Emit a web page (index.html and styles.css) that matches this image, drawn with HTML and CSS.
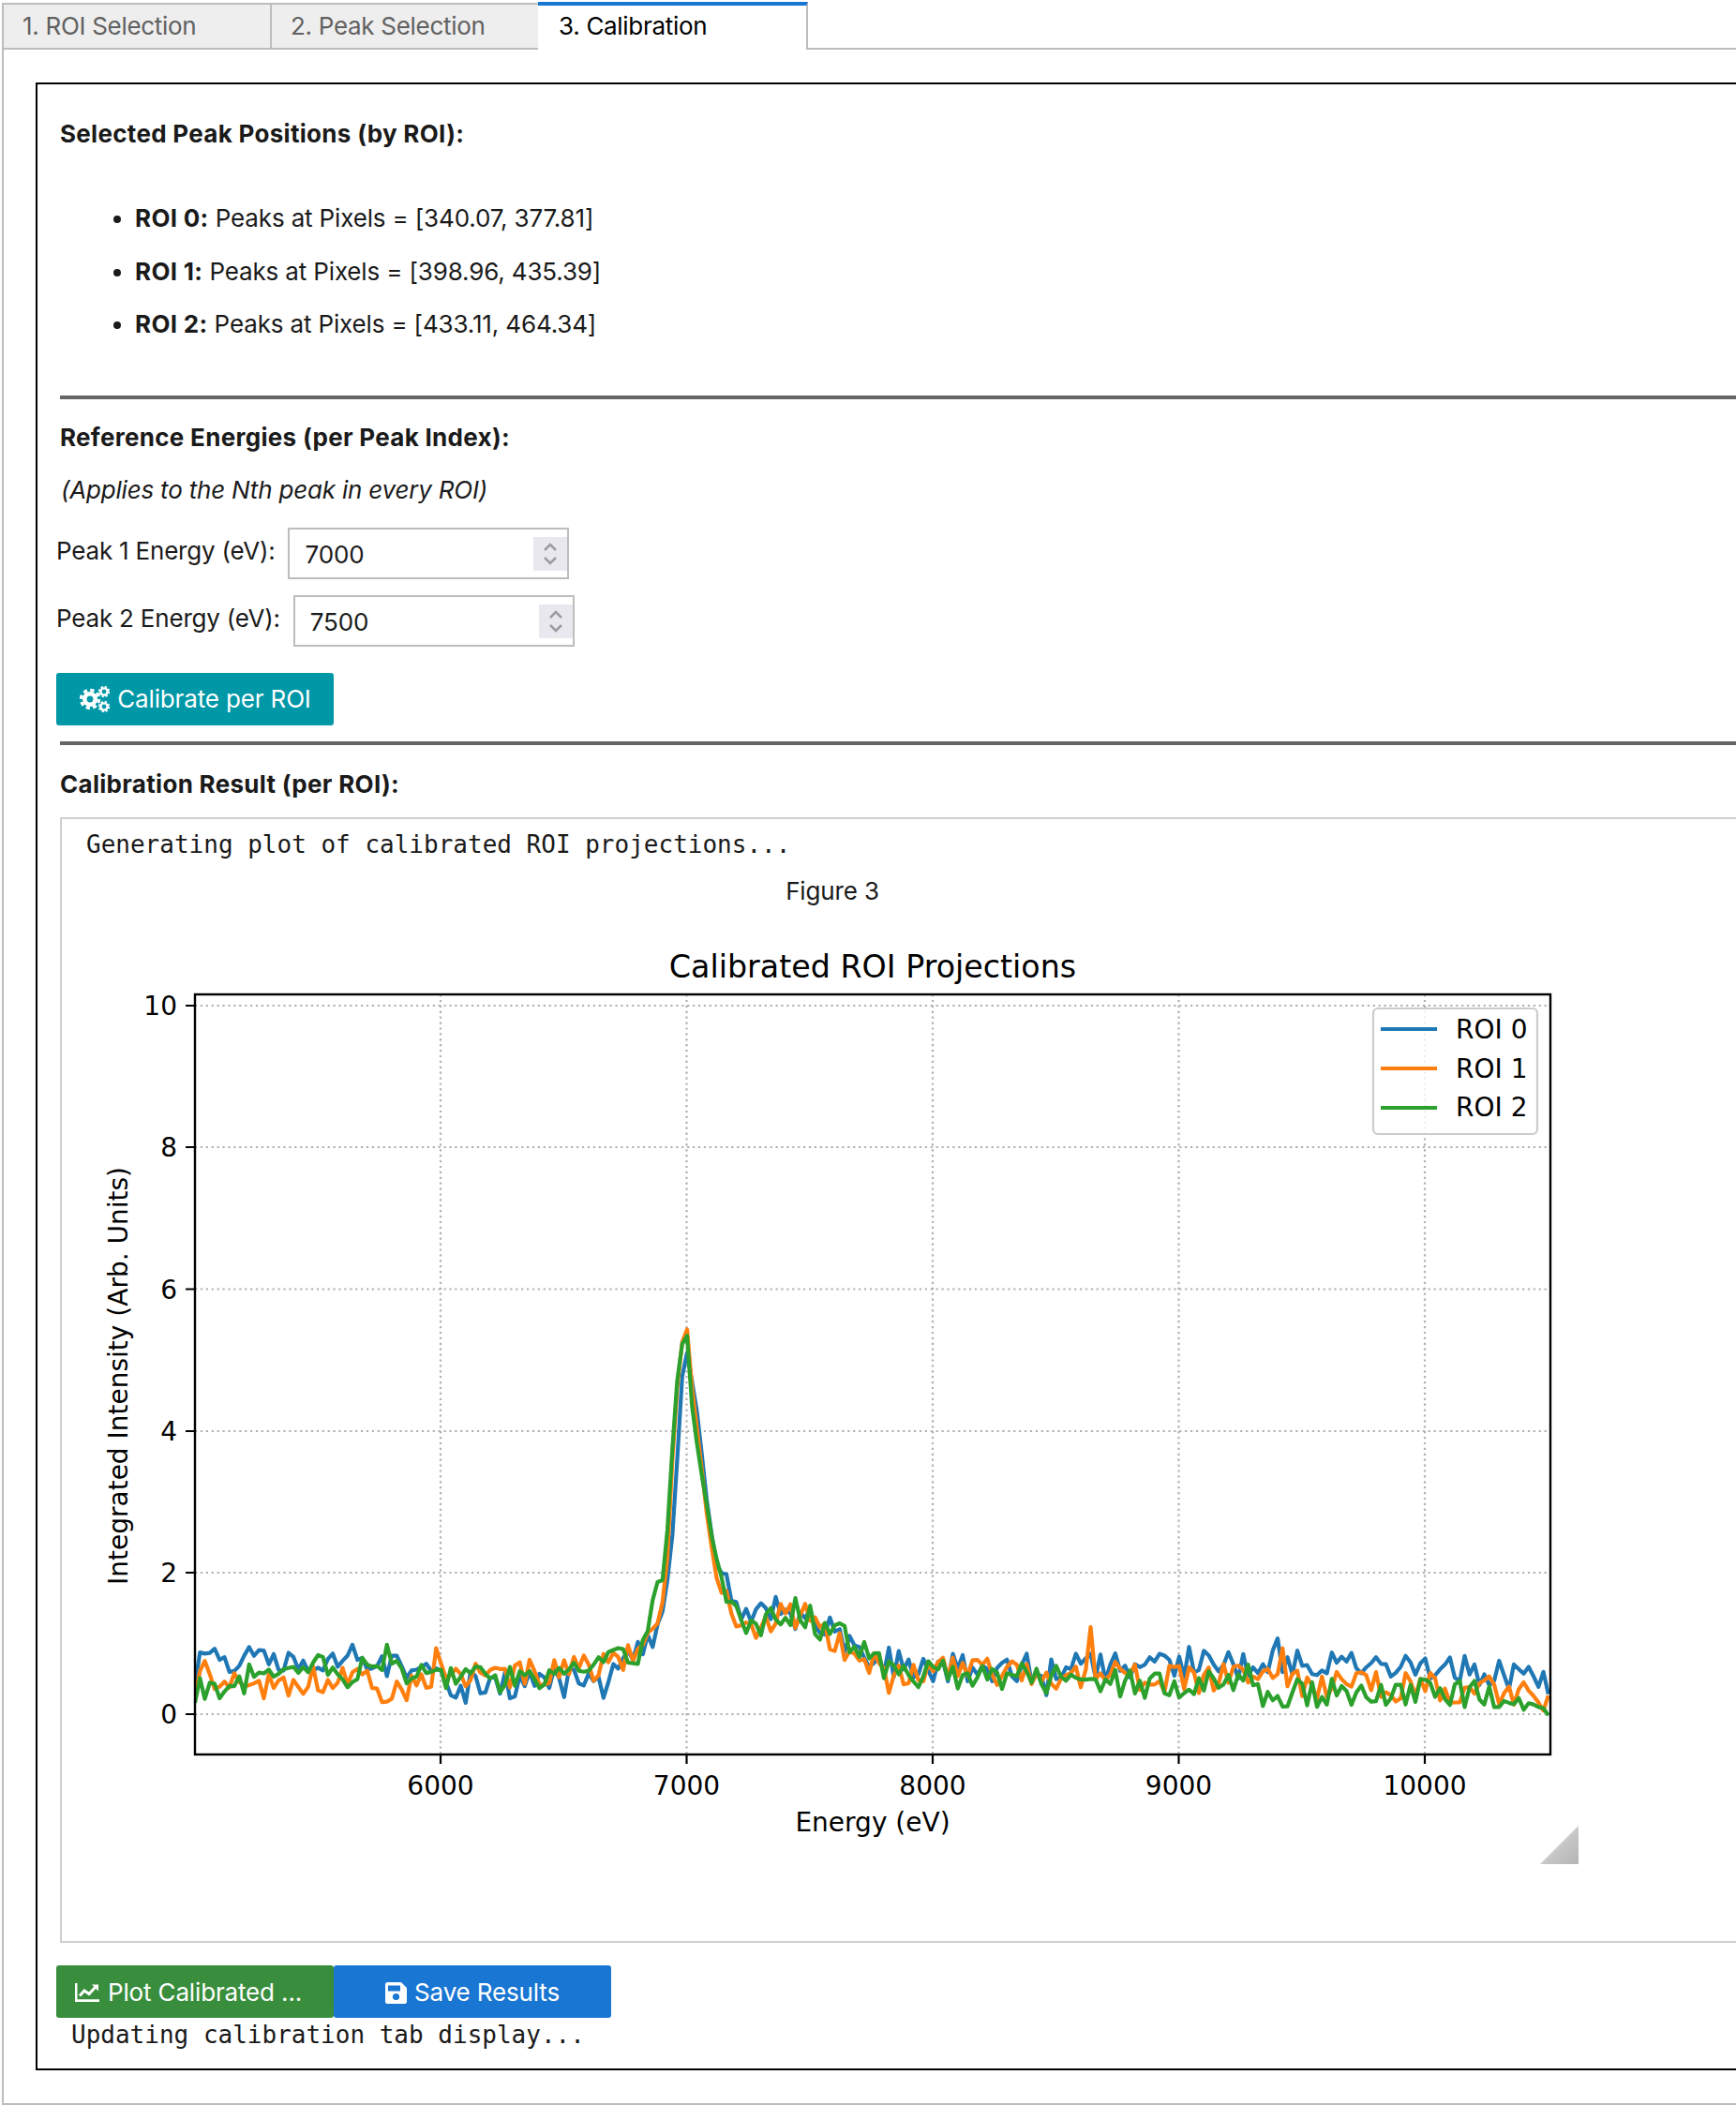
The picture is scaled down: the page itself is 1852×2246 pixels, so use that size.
FILE: index.html
```html
<!DOCTYPE html>
<html lang="en">
<head>
  <meta charset="UTF-8" />
  <title>Calibration</title>
  <link rel="stylesheet" href="styles.css">
</head>
<body>
  <div class="tabs">
    <div class="tab">1. ROI Selection</div>
    <div class="tab">2. Peak Selection</div>
    <div class="tab active">3. Calibration</div>
    <div class="tab-fill"></div>
  </div>

  <div class="panel">
    <div class="box">
      <div class="heading first">Selected Peak Positions (by ROI):</div>
      <ul class="peaks">
        <li><b>ROI 0:</b> Peaks at Pixels = [340.07, 377.81]</li>
        <li><b>ROI 1:</b> Peaks at Pixels = [398.96, 435.39]</li>
        <li><b>ROI 2:</b> Peaks at Pixels = [433.11, 464.34]</li>
      </ul>
      <hr class="rule rule-top">

      <div class="heading">Reference Energies (per Peak Index):</div>
      <div class="note">(Applies to the Nth peak in every ROI)</div>

      <div class="field">
        <label for="peak1">Peak 1 Energy (eV):</label>
        <div class="num">
          <input id="peak1" type="text" value="7000">
          <span class="spin"><svg width="36" height="36" viewBox="0 0 36 36"><path d="M12 14l6-6 6 6M12 22l6 6 6-6" /></svg></span>
        </div>
      </div>
      <div class="field field-two">
        <label for="peak2">Peak 2 Energy (eV):</label>
        <div class="num">
          <input id="peak2" type="text" value="7500">
          <span class="spin"><svg width="36" height="36" viewBox="0 0 36 36"><path d="M12 14l6-6 6 6M12 22l6 6 6-6" /></svg></span>
        </div>
      </div>

      <button class="btn btn-cyan btn-calibrate">
        <svg class="icon" width="34" height="28" viewBox="0 0 34 28">
          <circle cx="12" cy="14" r="8" fill="#fff" />
          <circle cx="12" cy="14" r="9.5" fill="none" stroke="#fff" stroke-width="3.4" stroke-dasharray="4.2 3.26" />
          <circle cx="12" cy="14" r="3.4" fill="#0097a7" />
          <circle cx="27" cy="6" r="3.6" fill="none" stroke="#fff" stroke-width="2.4" />
          <circle cx="27" cy="6" r="5.2" fill="none" stroke="#fff" stroke-width="2" stroke-dasharray="2.2 1.9" />
          <circle cx="27" cy="22" r="3.6" fill="none" stroke="#fff" stroke-width="2.4" />
          <circle cx="27" cy="22" r="5.2" fill="none" stroke="#fff" stroke-width="2" stroke-dasharray="2.2 1.9" />
        </svg>
        Calibrate per ROI
      </button>
      <hr class="rule rule-mid">

      <div class="heading result">Calibration Result (per ROI):</div>
      <div class="output">
        <div class="mono">Generating plot of calibrated ROI projections...</div>
        <div class="fig-title">Figure 3</div>
        <svg class="figure" width="1592" height="1021" viewBox="92 969 1592 1021">
          <defs>
            <clipPath id="axes-clip"><rect x="208" y="1061" width="1446" height="811" /></clipPath>
            <linearGradient id="grip" x1="0" y1="0" x2="1" y2="1">
              <stop offset="0" stop-color="#ededed" />
              <stop offset="0.6" stop-color="#c4c4c4" />
              <stop offset="1" stop-color="#b4b4b4" />
            </linearGradient>
          </defs>

          <text class="plot-title" x="931" y="1043">Calibrated ROI Projections</text>

          <g class="grid">
            <path d="M470 1061V1872M732.5 1061V1872M995 1061V1872M1257.5 1061V1872M1520 1061V1872" />
            <path d="M208 1073H1654M208 1224H1654M208 1375.500H1654M208 1527H1654M208 1678H1654M208 1829H1654" />
          </g>

          <g clip-path="url(#axes-clip)">
            <polyline id="roi0" class="trace" stroke="#1f77b4" />
            <polyline id="roi1" class="trace" stroke="#ff7f0e" />
            <polyline id="roi2" class="trace" stroke="#2ca02c" />
          </g>

          <g class="ticks">
            <path d="M470 1872v10M732.500 1872v10M995 1872v10M1257.500 1872v10M1520 1872v10" />
            <path d="M208 1073h-10M208 1224h-10M208 1375.500h-10M208 1527h-10M208 1678h-10M208 1829h-10" />
          </g>
          <rect class="spine" x="208" y="1061" width="1446" height="811" />

          <g class="tick-x">
            <text x="470" y="1915">6000</text>
            <text x="732.500" y="1915">7000</text>
            <text x="995" y="1915">8000</text>
            <text x="1257.500" y="1915">9000</text>
            <text x="1520" y="1915">10000</text>
          </g>
          <g class="tick-y">
            <text x="189" y="1083">10</text>
            <text x="189" y="1234">8</text>
            <text x="189" y="1385.500">6</text>
            <text x="189" y="1537">4</text>
            <text x="189" y="1688">2</text>
            <text x="189" y="1839">0</text>
          </g>
          <text class="axis-label" x="931" y="1954">Energy (eV)</text>
          <text class="axis-label" transform="translate(136 1468) rotate(-90)">Integrated Intensity (Arb. Units)</text>

          <rect class="legend" x="1465" y="1076" width="175" height="134" rx="5" />
          <path class="trace" stroke="#1f77b4" d="M1473 1098H1533" />
          <path class="trace" stroke="#ff7f0e" d="M1473 1140H1533" />
          <path class="trace" stroke="#2ca02c" d="M1473 1182H1533" />
          <text class="legend-text" x="1553" y="1108">ROI 0</text>
          <text class="legend-text" x="1553" y="1150">ROI 1</text>
          <text class="legend-text" x="1553" y="1191">ROI 2</text>

          <polygon points="1684,1948 1684,1989 1643,1989" fill="url(#grip)" />
        </svg>
      </div>

      <div class="actions">
        <button class="btn btn-green">
          <svg class="icon" width="26" height="20" viewBox="0 0 26 20">
            <path d="M1.200 0V18.600H26" fill="none" stroke="#fff" stroke-width="2.600" />
            <path d="M5 13.500L10 8l5 3.500 6.500-7" fill="none" stroke="#fff" stroke-width="3" />
            <path d="M18 1.500h7v7z" fill="#fff" />
          </svg>
          Plot Calibrated ...
        </button>
        <button class="btn btn-blue">
          <svg class="icon" width="23" height="23" viewBox="0 0 23 23">
            <path d="M2.500 0H17L23 6V20.500A2.500 2.500 0 0 1 20.500 23H2.500A2.500 2.500 0 0 1 0 20.500V2.500A2.500 2.500 0 0 1 2.500 0Z" fill="#fff" />
            <rect x="3" y="3.500" width="13" height="6" fill="#1976d2" />
            <circle cx="11.500" cy="15.500" r="3.600" fill="#1976d2" />
          </svg>
          Save Results
        </button>
      </div>
      <div class="mono status">Updating calibration tab display...</div>
    </div>
  </div>

  <script src="plot.js"></script>
</body>
</html>
```

FILE: styles.css
```css
html, body {
  margin: 0;
  width: 1852px;
  height: 2246px;
  overflow: hidden;
  background: #fff;
}
body {
  font-family: Inter, "Liberation Sans", sans-serif;
  font-size: 26px;
  letter-spacing: -0.15px;
  color: #1a1a1a;
}
* {
  box-sizing: border-box;
}
.tabs {
  display: flex;
  align-items: flex-end;
  height: 53px;
  padding-left: 2px;
}
.tab {
  width: 286px;
  height: 50px;
  padding: 5px 0 0 20px;
  line-height: 36px;
  letter-spacing: -0.3px;
  background: #eeeeee;
  color: #616161;
  border: 2px solid #bdbdbd;
  border-right: 0;
}
.tab:nth-child(2) {
  width: 288px;
}
.tab.active {
  width: 288px;
  height: 51px;
  margin-left: -2px;
  padding: 4px 0 0 22px;
  background: #fff;
  color: #000;
  border: 0 solid #bdbdbd;
  border-top: 4px solid #1976d2;
  border-right-width: 2px;
}
.tab-fill {
  flex: 1;
  border-bottom: 2px solid #bdbdbd;
}
.panel {
  width: 2000px;
  height: 2193px;
  margin-left: 2px;
  padding: 35px 0 0 34px;
  border-left: 2px solid #bdbdbd;
  border-bottom: 2px solid #bdbdbd;
}
.box {
  width: 2000px;
  height: 2121px;
  padding: 35px 0 0 24px;
  border: 2px solid #000;
  line-height: 36px;
}
.heading {
  margin-top: 24px;
  font-weight: 700;
  letter-spacing: 0.3px;
}
.heading.first {
  margin-top: 0;
}
.heading.result {
  margin-top: 25px;
}
.peaks {
  margin: 54px 0 58px;
  padding: 0 0 0 80px;
}
.peaks b {
  letter-spacing: 0.3px;
}
.peaks li {
  margin-bottom: 20.5px;
}
.peaks li:last-child {
  margin-bottom: 0;
}
.rule {
  height: 4px;
  margin: 0 0 -1px;
  border: 0;
  background: #666;
}
.note {
  margin-top: 20px;
  letter-spacing: -0.2px;
}
.note {
  padding-left: 1px;
  font-style: italic;
}
.field {
  display: flex;
  align-items: center;
  gap: 14px;
  margin: 21.500px 0 0 -4px;
}
.field-two {
  margin-top: 17px;
}
.field label {
  margin-top: -5px;
  letter-spacing: -0.2px;
}
.num {
  position: relative;
  width: 300px;
  height: 55px;
  border: 2px solid #bdbdbd;
}
.num input {
  width: 100%;
  height: 100%;
  padding: 2px 0 0 16px;
  border: 0;
  outline: 0;
  font: inherit;
  letter-spacing: inherit;
  color: #1a1a1a;
  background: transparent;
}
.spin {
  position: absolute;
  top: 8px;
  right: 0;
  width: 36px;
  height: 36px;
  background: #e8e8ee;
}
.spin svg {
  display: block;
}
.spin path {
  fill: none;
  stroke: #9b9ba1;
  stroke-width: 2.500;
}
.btn {
  display: flex;
  align-items: center;
  gap: 7px;
  width: 296px;
  border: 0;
  border-radius: 3px;
  padding: 0;
  font: inherit;
  letter-spacing: inherit;
  color: #fff;
}
.icon {
  flex: none;
}
.btn-cyan {
  background: #0097a7;
}
.btn-calibrate {
  justify-content: center;
  height: 56px;
  margin: 28px 0 0 -4px;
  padding-top: 1px;
}
.btn-green {
  gap: 9px;
  padding: 3px 0 0 20px;
  background: #388e3c;
}
.btn-blue {
  justify-content: center;
  gap: 8px;
  padding-top: 3px;
  background: #1976d2;
}
.rule-mid {
  margin-top: 17px;
}
.output {
  width: 2000px;
  height: 1201px;
  margin-top: 17px;
  padding: 9px 0 0 26px;
  border: 2px solid #d0d0d0;
}
.mono {
  font-family: "DejaVu Sans Mono", "Liberation Mono", monospace;
  font-size: 26px;
  letter-spacing: 0;
  color: #1a1a1a;
}
.fig-title {
  width: 1592px;
  margin-top: 14px;
  text-align: center;
}
.figure {
  display: block;
  font-family: "DejaVu Sans", sans-serif;
  letter-spacing: 0;
}
.plot-title {
  font-size: 33.300px;
  text-anchor: middle;
}
.grid path {
  fill: none;
  stroke: #b0b0b0;
  stroke-width: 2.200;
  stroke-dasharray: 2.200 3.700;
}
.trace {
  fill: none;
  stroke-width: 4.200;
  stroke-linejoin: round;
}
.ticks path {
  fill: none;
  stroke: #000;
  stroke-width: 2.200;
}
.spine {
  fill: none;
  stroke: #000;
  stroke-width: 2.400;
}
.tick-x text {
  font-size: 28px;
  text-anchor: middle;
}
.tick-y text {
  font-size: 28px;
  text-anchor: end;
}
.axis-label {
  font-size: 28px;
  text-anchor: middle;
}
.legend {
  fill: rgba(255, 255, 255, 0.8);
  stroke: #cccccc;
  stroke-width: 2.200;
}
.legend-text {
  font-size: 28px;
}
.actions {
  display: flex;
  margin: 24px 0 0 -4px;
}
.actions .btn {
  height: 56px;
}
.status {
  margin-left: 12px;
}
```

FILE: plot.js
```js
// seeded noise on top of hand-read curve anchors: [x in px, intensity]
const anchors = {
  roi0: [[208,.6],[212,.8],[240,.75],[280,.75],[320,.68],[360,.75],[400,.7],[440,.7],[470,.42],[520,.38],[560,.42],[600,.45],[640,.42],[655,.6],[668,.9],[690,1.05],[700,1.2],[708,1.5],[714,2.1],[720,2.9],[724,4],[728,4.8],[732,5.1],[736,4.9],[741,4.45],[745,4.2],[750,3.5],[756,2.8],[765,2.1],[775,1.85],[785,1.5],[800,1.4],[830,1.45],[860,1.3],[880,1.25],[900,1],[930,.85],[960,.7],[1000,.65],[1100,.65],[1200,.68],[1300,.7],[1400,.72],[1500,.68],[1600,.58],[1654,.45]],
  roi1: [[208,.4],[213,.75],[225,.4],[260,.45],[300,.35],[320,.45],[360,.5],[400,.38],[430,.35],[470,.58],[520,.55],[560,.6],[600,.65],[640,.65],[670,.8],[690,1.1],[705,1.35],[712,2.2],[716,3.3],[720,4.2],[725,5],[729,5.35],[732,5.43],[736,5],[740,4.3],[745,3.9],[750,3.3],[756,2.6],[765,1.9],[775,1.55],[790,1.35],[810,1.2],[830,1.4],[860,1.4],[880,1.1],[905,.9],[930,.7],[950,.6],[1000,.65],[1050,.6],[1100,.55],[1200,.55],[1260,.5],[1340,.5],[1400,.4],[1500,.38],[1600,.35],[1654,.22]],
  roi2: [[208,.35],[215,.45],[225,.25],[240,.3],[262,.5],[280,.65],[330,.65],[380,.55],[412,.75],[440,.55],[470,.55],[520,.5],[560,.45],[600,.55],[640,.7],[680,.8],[695,1.3],[701,1.85],[708,1.9],[712,2.6],[716,3.3],[718,4],[721,4.5],[725,5],[728,5.24],[732,5.34],[736,4.55],[743,3.9],[746,3.5],[750,3.3],[758,2.6],[768,2],[775,1.75],[785,1.55],[797,1.2],[815,1.25],[850,1.45],[870,1.3],[900,1.05],[930,.85],[950,.6],[1000,.55],[1100,.5],[1200,.42],[1260,.42],[1320,.42],[1333,.3],[1400,.3],[1500,.3],[1600,.27],[1654,.15]]
};

const spikes = {
  roi0: [[374,.98],[495,.16],[642,.23],[733,5.1],[1115,.27],[1268,.95],[1362,1.07]],
  roi1: [[466,.93],[733,5.43],[948,.3],[1161,1.23],[1366,.93]],
  roi2: [[412,.98],[733,5.34],[849,1.64],[1329,.7]]
};

const STEP = 5.25;
const LEFT = 208;
const ZERO_Y = 1829;
const UNIT = 75.6;

function makeRandom(seed) {
  return function () {
    seed = (seed * 16807) % 2147483647;
    return seed / 2147483647 - 0.5;
  };
}

function baseAt(points, x) {
  for (let i = 1; i < points.length; i++) {
    if (x <= points[i][0]) {
      const a = points[i - 1];
      const b = points[i];
      return a[1] + (b[1] - a[1]) * (x - a[0]) / (b[0] - a[0]);
    }
  }
  return points[points.length - 1][1];
}

Object.keys(anchors).forEach(function (id, n) {
  const random = makeRandom(4711 + n * 977);
  const values = [];
  for (let i = 0; LEFT + i * STEP <= 1656; i++) {
    const x = LEFT + i * STEP;
    const calm = x > 700 && x < 775 ? 0.1 : 1;
    values.push(baseAt(anchors[id], x) + random() * 0.42 * calm);
  }
  spikes[id].forEach(function (s) {
    values[Math.round((s[0] - LEFT) / STEP)] = s[1];
  });
  const pts = values.map(function (v, i) {
    return (LEFT + i * STEP).toFixed(1) + "," + (ZERO_Y - v * UNIT).toFixed(1);
  });
  document.getElementById(id).setAttribute("points", pts.join(" "));
});
```
